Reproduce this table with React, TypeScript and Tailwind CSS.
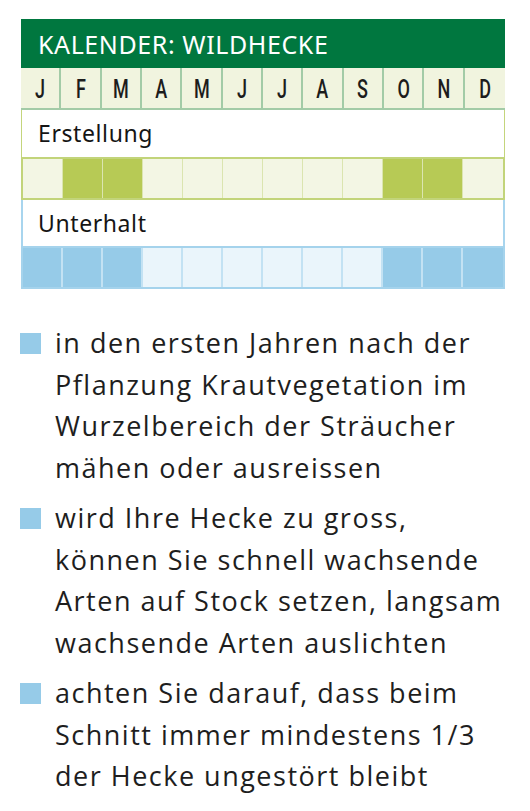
import React from "react";

const months = ["J", "F", "M", "A", "M", "J", "J", "A", "S", "O", "N", "D"];
const erst = [0, 1, 1, 0, 0, 0, 0, 0, 0, 1, 1, 0];
const unter = [1, 1, 1, 0, 0, 0, 0, 0, 0, 1, 1, 1];

const bullets = [
  ["in den ersten Jahren nach der", "Pflanzung Krautvegetation im", "Wurzelbereich der Sträucher", "mähen oder ausreissen"],
  ["wird Ihre Hecke zu gross,", "können Sie schnell wachsende", "Arten auf Stock setzen, langsam", "wachsende Arten auslichten"],
  ["achten Sie darauf, dass beim", "Schnitt immer mindestens 1/3", "der Hecke ungestört bleibt"],
];

export default function App() {
  return (
    <div className="w-[530px] h-[811px] bg-white overflow-hidden">
      <div className="pt-[19px] pl-[21px]">
        <div className="w-[484px]">
          <div className="h-[49px] bg-[#00773f] flex items-center pl-[17px] pt-[2px]">
            <span
              className="text-white text-[25px] tracking-[0.6px]"
              style={{ fontFamily: '"Noto Sans", "Open Sans", sans-serif' }}
            >
              KALENDER: WILDHECKE
            </span>
          </div>
          <div className="grid grid-cols-12 h-[42px] bg-[#f1f4df] border-b-2 border-[#a3cba7]">
            {months.map((m, i) => (
              <div
                key={i}
                className={`flex items-center justify-center text-[#1c1c1c] ${i < 11 ? "border-r-2 border-[#a3cba7]" : ""}`}
              >
                <span
                  className="inline-block text-[25px] font-medium scale-x-[0.72] leading-none pt-[2px]"
                  style={{ fontFamily: 'Roboto, "Liberation Sans", sans-serif' }}
                >
                  {m}
                </span>
              </div>
            ))}
          </div>
          <div className="h-[47px] bg-white border-x border-[#c4d57c] flex items-center pl-[16px]">
            <span className="text-[23px] text-[#151515] tracking-[0.6px]" style={{ fontFamily: '"Noto Sans", sans-serif' }}>
              Erstellung
            </span>
          </div>
          <div className="grid grid-cols-12 h-[43px] border-2 border-[#c2d47a] bg-[#f3f6e4]">
            {erst.map((v, i) => (
              <div
                key={i}
                className={`${v ? "bg-[#b7ca55]" : "bg-[#f3f6e4]"} ${i < 11 ? "border-r border-[#dbe5b0]" : ""}`}
              />
            ))}
          </div>
          <div className="h-[46px] bg-white border-x-2 border-[#a8d5ee] flex items-center pl-[15px]">
            <span className="text-[23px] text-[#151515] tracking-[0.6px]" style={{ fontFamily: '"Noto Sans", sans-serif' }}>
              Unterhalt
            </span>
          </div>
          <div className="grid grid-cols-12 h-[43px] border-2 border-[#a5d3ec] bg-[#eaf5fb]">
            {unter.map((v, i) => (
              <div
                key={i}
                className={`${v ? "bg-[#96cbe8]" : "bg-[#eaf5fb]"} ${i < 11 ? "border-r-2 border-[#c3e2f3]" : ""}`}
              />
            ))}
          </div>
        </div>
      </div>

      <div className="mt-[33px] pl-[20px] flex flex-col gap-[9px]" style={{ fontFamily: '"Open Sans", "Noto Sans", sans-serif' }}>
        {bullets.map((lines, i) => (
          <div key={i} className="flex">
            <div className="w-[21px] h-[21px] bg-[#96cbe8] mt-[11px] shrink-0" />
            <div className="ml-[14px] text-[27px] tracking-[1.5px] leading-[41.5px] text-[#1e1e1e] whitespace-nowrap">
              {lines.map((l, j) => (
                <div key={j}>{l}</div>
              ))}
            </div>
          </div>
        ))}
      </div>
    </div>
  );
}
